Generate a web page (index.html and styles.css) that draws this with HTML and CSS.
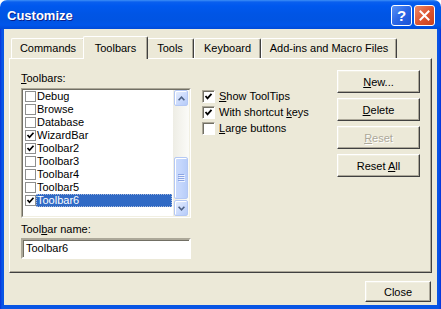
FILE: index.html
```html
<!DOCTYPE html>
<html lang="en">
<head>
    <meta charset="UTF-8">
    <title>Customize</title>
    <link rel="stylesheet" href="styles.css">
</head>
<body>
    <div class="window">
        <div class="titlebar">
            <span class="title">Customize</span>
            <div class="caption-buttons">
                <span class="cap-btn help">?</span>
                <span class="cap-btn close">
                    <svg width="11" height="11" viewBox="0 0 11 11"><path d="M1.5 1.5 L9.5 9.5 M9.5 1.5 L1.5 9.5" stroke="#fff" stroke-width="2" stroke-linecap="square"/></svg>
                </span>
            </div>
        </div>
        <div class="frame">
            <div class="client">
                <div class="tabs">
                    <div class="tab w-commands">Commands</div>
                    <div class="tab active w-toolbars">Toolbars</div>
                    <div class="tab w-tools">Tools</div>
                    <div class="tab w-keyboard">Keyboard</div>
                    <div class="tab w-addins">Add-ins and Macro Files</div>
                </div>
                <div class="panel">
                    <div class="col-left">
                        <div class="label"><u>T</u>oolbars:</div>
                        <div class="listbox">
                            <div class="list-inner">
                                <div class="items">
                                    <div class="item"><span class="box"></span><span class="name">Debug</span></div>
                                    <div class="item"><span class="box"></span><span class="name">Browse</span></div>
                                    <div class="item"><span class="box"></span><span class="name">Database</span></div>
                                    <div class="item"><span class="box"><svg width="9" height="9" viewBox="0 0 9 9"><path d="M1.5 4 L3.5 6.3 L7.5 1.8" fill="none" stroke="#000" stroke-width="1.7"/></svg></span><span class="name">WizardBar</span></div>
                                    <div class="item"><span class="box"><svg width="9" height="9" viewBox="0 0 9 9"><path d="M1.5 4 L3.5 6.3 L7.5 1.8" fill="none" stroke="#000" stroke-width="1.7"/></svg></span><span class="name">Toolbar2</span></div>
                                    <div class="item"><span class="box"></span><span class="name">Toolbar3</span></div>
                                    <div class="item"><span class="box"></span><span class="name">Toolbar4</span></div>
                                    <div class="item"><span class="box"></span><span class="name">Toolbar5</span></div>
                                    <div class="item"><span class="box"><svg width="9" height="9" viewBox="0 0 9 9"><path d="M1.5 4 L3.5 6.3 L7.5 1.8" fill="none" stroke="#000" stroke-width="1.7"/></svg></span><span class="name selected">Toolbar6</span></div>
                                </div>
                                <div class="scrollbar">
                                    <div class="sb-btn">
                                        <svg width="7" height="5" viewBox="0 0 7 5"><path d="M0.6 4.2 L3.5 1.2 L6.4 4.2" fill="none" stroke="#4d6185" stroke-width="1.6"/></svg>
                                    </div>
                                    <div class="sb-track">
                                        <div class="sb-thumb">
                                            <svg width="7" height="8" viewBox="0 0 7 8"><path d="M0 0.5 H6 M0 2.5 H6 M0 4.5 H6 M0 6.5 H6" stroke="#8ca5e4" stroke-width="1"/><path d="M1 1.5 H7 M1 3.5 H7 M1 5.5 H7 M1 7.5 H7" stroke="#eef3fe" stroke-width="1"/></svg>
                                        </div>
                                    </div>
                                    <div class="sb-btn">
                                        <svg width="7" height="5" viewBox="0 0 7 5"><path d="M0.6 0.8 L3.5 3.8 L6.4 0.8" fill="none" stroke="#4d6185" stroke-width="1.6"/></svg>
                                    </div>
                                </div>
                            </div>
                        </div>
                        <div class="label name-label">Tool<u>b</u>ar name:</div>
                        <div class="textbox">Toolbar6</div>
                    </div>
                    <div class="col-mid">
                        <div class="check-row">
                            <span class="check"><svg width="9" height="9" viewBox="0 0 9 9"><path d="M1.5 4 L3.5 6.3 L7.5 1.8" fill="none" stroke="#000" stroke-width="1.8"/></svg></span>
                            <span><u>S</u>how ToolTips</span>
                        </div>
                        <div class="check-row">
                            <span class="check"><svg width="9" height="9" viewBox="0 0 9 9"><path d="M1.5 4 L3.5 6.3 L7.5 1.8" fill="none" stroke="#000" stroke-width="1.8"/></svg></span>
                            <span>With shortcut <u>k</u>eys</span>
                        </div>
                        <div class="check-row">
                            <span class="check"></span>
                            <span><u>L</u>arge buttons</span>
                        </div>
                    </div>
                    <div class="col-right">
                        <button class="btn"><u>N</u>ew...</button>
                        <button class="btn"><u>D</u>elete</button>
                        <button class="btn disabled"><u>R</u>eset</button>
                        <button class="btn">Reset <u>A</u>ll</button>
                    </div>
                </div>
                <div class="footer">
                    <button class="btn close-btn">Close</button>
                </div>
            </div>
        </div>
    </div>
</body>
</html>
```

FILE: styles.css
```css
body { margin: 0; background: #ffffff; font-family: "Liberation Sans", Arial, sans-serif; font-size: 11px; color: #000; }
.window { width: 441px; height: 309px; display: flex; flex-direction: column; }

.titlebar { height: 29px; flex: none; display: flex; align-items: center; justify-content: space-between; padding: 0 6px 0 7px; box-sizing: border-box; border-radius: 7px 7px 0 0; background: linear-gradient(to bottom, #3d8ff6 0, #0a5fee 2px, #0058ee 6px, #0055e5 14px, #0054e3 20px, #0056ea 25px, #004ad8 29px); }
.title { color: #fff; font-weight: bold; font-size: 13px; padding-top: 2px; text-shadow: 1px 1px #0a1f8a; }
.caption-buttons { display: flex; gap: 2px; padding-top: 1px; }
.cap-btn { width: 21px; height: 21px; box-sizing: border-box; border: 1px solid #fff; border-radius: 3px; display: flex; align-items: center; justify-content: center; }
.cap-btn.help { background: linear-gradient(135deg, #5b93f5 0, #2a66e6 50%, #1a52d6 100%); color: #fff; font-weight: bold; font-size: 15px; }
.cap-btn.close { background: linear-gradient(135deg, #ec8a69 0, #de5632 50%, #c8401c 100%); }

.frame { flex: 1; display: flex; padding: 0 4px 4px; background: linear-gradient(to right, #0831d9 0, #0856e8 2px, #0855e4 3px, #0855e4 437px, #0852e6 439px, #0831d9 441px); }
.client { flex: 1; background: #ece9d8; padding: 7px 5px 0; box-sizing: border-box; display: flex; flex-direction: column; }

.tabs { height: 22px; display: flex; align-items: flex-end; margin-left: 2px; position: relative; z-index: 2; }
.tab { height: 20px; line-height: 18px; box-sizing: border-box; text-align: center; background: #ece9d8; border-top: 1px solid #fff; border-left: 1px solid #fff; border-right: 1px solid #404040; border-radius: 2px 2px 0 0; box-shadow: inset -1px 0 #aca899; }
.tab.active { height: 23px; line-height: 22px; margin: 0 -2px -1px; position: relative; z-index: 3; }
.w-commands { width: 74px; }
.w-toolbars { width: 65px; }
.w-tools { width: 48px; }
.w-keyboard { width: 67px; }
.w-addins { width: 136px; }

.panel { height: 215px; box-sizing: border-box; border: 1px solid; border-color: #fff #404040 #404040 #fff; box-shadow: inset -1px -1px #aca899; padding: 11px 11px 13px; display: grid; grid-template-columns: 170px 1fr 83px; column-gap: 11px; }

.label { line-height: 13px; }
.col-left .label:first-child { padding-top: 2px; margin-bottom: 3px; }
.name-label { margin-top: 5px; margin-bottom: 2px; }
u { text-decoration: underline; text-underline-offset: 1px; }

.listbox { height: 130px; box-sizing: border-box; border: 1px solid; border-color: #aca899 #fff #fff #aca899; }
.list-inner { height: 100%; box-sizing: border-box; border: 1px solid; border-color: #716f64 #f1efe2 #f1efe2 #716f64; background: #fff; display: flex; }
.items { flex: 1; }
.item { height: 13px; display: flex; align-items: center; }
.box { width: 11px; height: 11px; box-sizing: border-box; border: 1px solid #8e8f8f; margin-left: 2px; display: flex; align-items: center; justify-content: center; background: #fff; }
.name { padding: 0 1px; line-height: 13px; margin-left: 0; }
.name.selected { flex: 1; background: #316ac5; color: #fff; outline: 1px dotted #a8b8d8; outline-offset: -1px; margin-right: 1px; }

.scrollbar { width: 16px; display: flex; flex-direction: column; background: linear-gradient(to right, #eeede5, #fbfbf8); }
.sb-btn { height: 16px; margin: 0 1px; box-sizing: border-box; border: 1px solid #b4c8f4; border-radius: 2px; background: linear-gradient(135deg, #e8effd 0, #c9d9fc 60%, #b6cbf8 100%); box-shadow: inset 1px 1px #fff; display: flex; align-items: center; justify-content: center; }
.sb-track { flex: 1; display: flex; flex-direction: column; justify-content: flex-end; padding-bottom: 1px; }
.sb-thumb { height: 42px; margin: 0 1px; box-sizing: border-box; border: 1px solid #b4c8f4; border-radius: 2px; background: linear-gradient(to right, #cbdafc 0, #c4d6fc 50%, #b8cdf9 100%); box-shadow: inset 1px 1px #fff; display: flex; align-items: center; justify-content: center; }

.textbox { height: 21px; box-sizing: border-box; border: 2px solid; border-color: #aca899 #fff #fff #aca899; box-shadow: inset 1px 1px #716f64; background: #fff; padding: 0 3px; line-height: 17px; }

.col-mid { padding-top: 20px; display: flex; flex-direction: column; gap: 3px; }
.check-row { height: 13px; display: flex; align-items: center; gap: 4px; line-height: 13px; }
.check { width: 13px; height: 13px; box-sizing: border-box; border: 1px solid; border-color: #aca899 #fff #fff #aca899; box-shadow: inset 1px 1px #716f64; background: #fff; display: flex; align-items: center; justify-content: center; }

.col-right { display: flex; flex-direction: column; gap: 5px; }
.btn { font-family: "Liberation Sans", Arial, sans-serif; font-size: 11px; color: #000; background: #ece9d8; height: 23px; padding: 0; box-sizing: border-box; border: 1px solid; border-color: #fff #404040 #404040 #fff; box-shadow: inset -1px -1px #aca899, inset 1px 1px #f1efe2; }
.btn.disabled { color: #aca899; text-shadow: 1px 1px #fff; }

.footer { display: flex; justify-content: flex-end; margin-top: 8px; padding-right: 1px; }
.close-btn { width: 66px; height: 21px; }
```
